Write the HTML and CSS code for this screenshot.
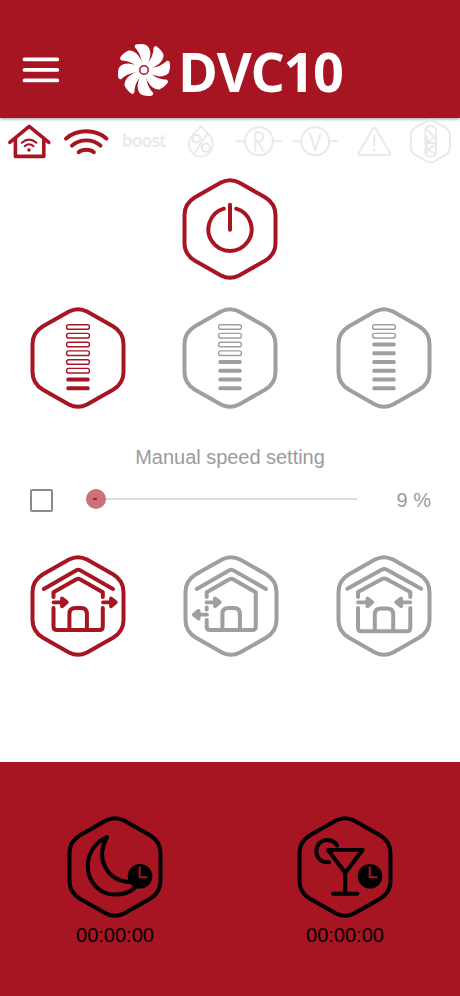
FILE: index.html
```html
<!DOCTYPE html>
<html lang="en">
<head>
<meta charset="utf-8">
<title>DVC10</title>
<link rel="stylesheet" href="styles.css">
</head>
<body>
<svg class="defs" width="0" height="0" aria-hidden="true">
  <defs>
    <path id="hex" d="M-9 -46.5Q0 -51.2 9 -46.5L35 -31.8Q45.5 -25.5 45.5 -14V14Q45.5 25.5 35 31.8L9 46.5Q0 51.2 -9 46.5L-35 31.8Q-45.5 25.5 -45.5 14V-14Q-45.5 -25.5 -35 -31.8Z"/>
    <path id="blade" d="M-2.2 -5.4C-2.4 -12.5 -4.8 -18 -9 -22.6Q-10 -25.2 -7.2 -25.8Q-1 -26.6 3 -24.6Q6.4 -21.5 6.4 -15.5Q5.8 -9.5 3.2 -5Z"/>
    <rect id="empty" x="-11.4" y="-2.3" width="22.8" height="4.6" rx="2.1" stroke-width="1.4"/>
    <rect id="full" x="-11.6" y="-2" width="23.2" height="4" rx="1.5" stroke="none" fill="currentColor"/>
    <g id="clock">
      <circle cx="25" cy="9.3" r="12.3" fill="currentColor" stroke="none"/>
      <path d="M24.7 -.5V10.2H32.4" class="hands"/>
    </g>
  </defs>
</svg>
<div class="app">
  <header class="header">
    <svg class="menu" width="38" height="26" viewBox="0 0 38 26"><path d="M2.5 2.4H35.3M2.5 12.9H35.3M2.5 23.4H35.3"/></svg>
    <svg class="fan" width="54" height="54" viewBox="-27 -27 54 54">
      <use href="#blade"/><use href="#blade" transform="rotate(45)"/><use href="#blade" transform="rotate(90)"/><use href="#blade" transform="rotate(135)"/><use href="#blade" transform="rotate(180)"/><use href="#blade" transform="rotate(225)"/><use href="#blade" transform="rotate(270)"/><use href="#blade" transform="rotate(315)"/>
      <circle class="rim" r="6.2"/><circle class="ring" r="5"/><circle class="hub" r="3.5"/>
    </svg>
    <svg class="brand" width="170" height="60" viewBox="0 0 170 60"><text x="2" y="47.3" textLength="166" lengthAdjust="spacing">DVC10</text></svg>
  </header>

  <div class="status">
    <svg class="on" viewBox="-23 -23 46 46"><path stroke-width="3.6" d="M-19.2 .3L.2 -15.6L19.8 .3M-13.6 -4V14.4H14.8V-4"/><path stroke-width="2" d="M-7.2 .8Q0 -5.6 7.4 .8M-4.4 4.2Q0 .2 4.6 4.2"/><circle cy="8" r="1.8" class="dot"/></svg>
    <svg class="on" viewBox="-23 -23 46 46"><path stroke-width="3.9" d="M-20 -3.4C-9 -13.2 9.5 -13.2 20.5 -3.4M-14 3.7C-6.5 -3.4 7 -3.4 14.5 3.7M-7.4 10.2C-3.5 7 4 7 7.9 10.2"/></svg>
    <span class="boost">boost</span>
    <svg viewBox="-23 -23 46 46"><path stroke-width="1.8" d="M0 -15.8C-5 -9.8 -12 -6 -12.2 1.8A12 12.8 0 0 0 11.8 1.8C11.6 -6 5 -9.8 0 -15.8ZM6.5 -8.5L-6.5 11.5"/><circle cx="-4.6" cy="-3.2" r="4"/><circle cx="4.8" cy="5.8" r="4"/></svg>
    <svg viewBox="-23 -23 46 46"><circle cy="-.7" r="14"/><path d="M-22.5 -.7H-14M14 -.7H22M-3.6 8.7V-9.8H0C5.5 -9.8 5.5 -.8 0 -.8H-3.6M-1 -.8L4.2 8.7"/></svg>
    <svg viewBox="-23 -23 46 46"><circle cx="-.8" cy="-.7" r="14"/><path d="M-22.5 -.7H-15M13 -.7H21M-6 -8.6L-.7 8.3L4.5 -8.6"/></svg>
    <svg viewBox="-23 -23 46 46"><path d="M-1.2 -13.2Q.3 -15.4 1.8 -13.2L15.9 10.6Q16.8 13 14.4 13H-13.7Q-16.2 13 -15.2 10.6ZM.3 -6.6V3.6M.3 8V8.2"/></svg>
    <svg viewBox="-23 -23 46 46"><use href="#hex" transform="translate(-.6 -.7) scale(.43)" stroke-width="4.6"/><rect x="-5.6" y="-15.8" width="10.6" height="30.2" rx="3.5"/><path d="M-4 -12L3.5 -5L-4 1H4M3.5 3L-3 7.5L4 12M-4 -5V11"/></svg>
  </div>

  <main class="main">
    <div class="row power">
      <svg class="icon on" viewBox="-48 -52 96 104"><use href="#hex"/><path d="M-6.2 -20.3A21.6 21.6 0 1 0 6.2 -20.3M0 -24.2V.8"/></svg>
    </div>
    <div class="row speeds">
      <svg class="icon on" viewBox="-48 -52 96 104"><use href="#hex"/><use href="#empty" y="-31"/><use href="#empty" y="-22.3"/><use href="#empty" y="-13.5"/><use href="#empty" y="-4.8"/><use href="#empty" y="4"/><use href="#empty" y="12.7"/><use href="#full" y="21.5"/><use href="#full" y="30.3"/></svg>
      <svg class="icon medium" viewBox="-48 -52 96 104"><use href="#hex"/><use href="#empty" y="-31"/><use href="#empty" y="-22.3"/><use href="#empty" y="-13.5"/><use href="#empty" y="-4.8"/><use href="#full" y="4"/><use href="#full" y="12.7"/><use href="#full" y="21.5"/><use href="#full" y="30.3"/></svg>
      <svg class="icon" viewBox="-48 -52 96 104"><use href="#hex"/><use href="#empty" y="-31"/><use href="#empty" y="-22.3"/><use href="#full" y="-13.5"/><use href="#full" y="-4.8"/><use href="#full" y="4"/><use href="#full" y="12.7"/><use href="#full" y="21.5"/><use href="#full" y="30.3"/></svg>
    </div>
    <div class="label">Manual speed setting</div>
    <div class="manual">
      <span class="check"></span>
      <span class="slider"><span class="thumb"></span><span class="track"></span></span>
      <span class="value">9 %</span>
    </div>
    <div class="row modes">
      <svg class="icon on" viewBox="-48 -52 96 104"><use href="#hex"/><path d="M-34.2 -17L-2 -35.6Q.2 -36.9 2.4 -35.6L35 -17M-24.5 -9V-13.7L-2 -26.6Q.2 -27.8 2.4 -26.6L24.8 -13.7V-9M-24.5 2V20.5Q-24.5 24 -21 24H21.3Q24.8 24 24.8 20.5V2M-8.6 23V8Q-8.6 2 -2.6 2H3Q8.9 2 8.9 8V23"/><path class="arrow" d="M-24.5 -3.7H-12M-16 -7.6L-11.2 -3.7L-16 .2ZM25 -3.7H37M33 -7.6L37.8 -3.7L33 .2Z"/></svg>
      <svg class="icon" viewBox="-48 -52 96 104"><use href="#hex"/><path d="M-34.2 -17L-2 -35.6Q.2 -36.9 2.4 -35.6L35 -17M-24.3 -9V-13.7L-2 -26.6Q.2 -27.8 2.4 -26.6L24.8 -13.7V20.5Q24.8 24 21.3 24H-21Q-24.3 24 -24.3 20.5V14M-24.3 1.5V3.5M-8.6 23V8Q-8.6 2 -2.6 2H3Q8.9 2 8.9 8V23"/><path class="arrow" d="M-24.5 -3.7H-12M-16 -7.6L-11.2 -3.7L-16 .2ZM-24 8.7H-36M-32.4 4.8L-37.2 8.7L-32.4 12.6Z"/></svg>
      <svg class="icon" viewBox="-48 -52 96 104"><use href="#hex"/><path d="M-36.7 -17.3L-2 -36.4Q.2 -37.6 2.4 -36.4L37.2 -17.3M-26 -9V-14L-2 -27Q.2 -28.2 2.4 -27L26.3 -14V-9M-26 2V21.8Q-26 25.3 -22.5 25.3H22.8Q26.3 25.3 26.3 21.8V2M-9.2 24V8.5Q-9.2 2.5 -3.2 2.5H3.2Q9.2 2.5 9.2 8.5V24"/><path class="arrow" d="M-26 -3.7H-12M-16.5 -7.6L-11.7 -3.7L-16.5 .2ZM26.3 -3.7H13M17.1 -7.6L12.3 -3.7L17.1 .2Z"/></svg>
    </div>
  </main>

  <footer class="footer">
    <div class="timer">
      <svg class="icon" viewBox="-48 -52 96 104"><use href="#hex"/><path d="M-8 -29.8C-18.5 -25.5 -27.3 -14.5 -27.3 -1C-27.3 15 -15 27.6 0 27.6C8.5 27.6 15.5 25 20.5 20M-8 -29.8C-19.5 -9.5 -9.5 14 16 15.2"/><use href="#clock"/></svg>
      <span>00:00:00</span>
    </div>
    <div class="timer">
      <svg class="icon" viewBox="-48 -52 96 104"><use href="#hex"/><path d="M-7.9 -21.5A11.2 11.2 0 1 0 -15.8 -4.8M-17 -17H17.6L.3 5.8ZM.2 6V26.7M-12 26.7H12.3"/><use href="#clock"/></svg>
      <span>00:00:00</span>
    </div>
  </footer>
</div>
</body>
</html>
```
FILE: styles.css
```css
* { box-sizing: border-box; }
body {
  margin: 0;
  background: #fff;
  font-family: "Liberation Sans", Arial, sans-serif;
  font-size: 20px;
}
.defs { display: block; height: 0; }
.app {
  width: 460px;
  height: 996px;
  display: flex;
  flex-direction: column;
  overflow: hidden;
}
svg { display: block; flex: none; overflow: visible; }

.header {
  height: 118px;
  flex: none;
  background: #a71422;
  box-shadow: 0 1px 3px rgba(0, 0, 0, .4);
  display: flex;
  align-items: flex-start;
  padding: 43px 0 0 22px;
}
.menu { margin-top: 14px; }
.menu path { stroke: #fff; stroke-width: 3.8; stroke-linecap: round; }
.fan { margin-left: 57px; fill: #fff; }
.fan .rim { fill: #fff; }
.fan .ring { fill: #a71422; }
.fan .hub { fill: #fff; }
.brand { margin: 2px 0 0 5px; }
.brand text {
  font-family: "Open Sans", "Noto Sans", sans-serif;
  font-weight: 700;
  font-size: 54px;
  fill: #fff;
}

.status {
  flex: none;
  height: 48px;
  display: grid;
  grid-template-columns: repeat(8, 1fr);
  align-items: center;
  justify-items: center;
  color: #e9e9e9;
}
.status svg {
  width: 46px;
  height: 46px;
  fill: none;
  stroke: currentColor;
  stroke-width: 2;
  stroke-linecap: round;
  stroke-linejoin: round;
}
.status .on { color: #a71422; }
.status .dot { fill: currentColor; stroke: none; }
.boost {
  font: 600 17px/24px "Noto Sans", sans-serif;
  letter-spacing: -.7px;
  margin-top: -3px;
}

.main { flex: 1; display: flex; flex-direction: column; }
.row {
  display: flex;
  gap: 57px;
  padding-left: 30px;
}
.power { justify-content: center; padding-left: 0; margin-top: 11px; }
.icon {
  width: 96px;
  height: 104px;
  fill: none;
  color: #9f9f9f;
  stroke: currentColor;
  stroke-width: 4;
  stroke-linecap: round;
  stroke-linejoin: round;
}
.icon.on { color: #a71422; }
.icon.medium { margin: 0 1px 0 -1px; }
.arrow { stroke-width: 3.8; fill: currentColor; }
.hands { stroke: #a71422; stroke-width: 2; fill: none; stroke-linecap: butt; stroke-linejoin: miter; }
.speeds { margin-top: 25px; }
.label {
  margin-top: 36px;
  line-height: 22px;
  text-align: center;
  color: #9b9b9b;
  letter-spacing: -.03px;
}
.manual {
  margin-top: 17px;
  height: 28px;
  padding: 0 29px 0 30px;
  display: flex;
  align-items: center;
  color: #9b9b9b;
}
.check {
  width: 23px;
  height: 23px;
  margin-top: 3px;
  border: 2px solid #8a8a8a;
  border-radius: 2px;
}
.slider { width: 271px; margin: -1px 0 0 33px; display: flex; align-items: center; }
.thumb { width: 20px; height: 20px; border-radius: 50%; background: #ca707b; display: flex; align-items: center; justify-content: center; }
.thumb::after { content: ""; width: 4px; height: 2px; margin-right: 3px; border-radius: 1px; background: #a71422; }
.track { flex: 1; height: 2px; background: #dcdcdc; }
.value { margin-left: auto; margin-top: 3px; }
.modes { margin-top: 41px; }

.footer {
  flex: none;
  height: 234px;
  background: #a71422;
  display: grid;
  grid-template-columns: 1fr 1fr;
  padding-top: 53px;
}
.timer { display: flex; flex-direction: column; align-items: center; color: #000; }
.timer .icon { color: #000; }
.timer span { margin-top: 5px; line-height: 22px; }
```
